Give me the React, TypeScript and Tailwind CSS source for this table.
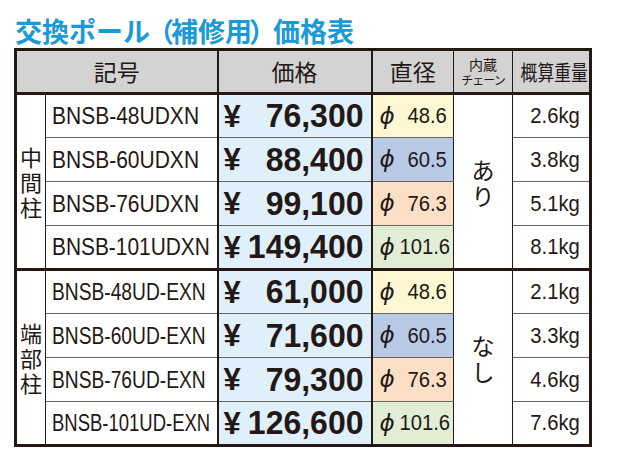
import React from "react";

type Row = { model: string; fit: string; price: string; dia: string; weight: string };

// each model number is squeezed to its own width, as in the printed table
const groups: { label: string; chain: string; rows: Row[] }[] = [
  {
    label: "中間柱",
    chain: "あり",
    rows: [
      { model: "BNSB-48UDXN", fit: "scale-x-[0.875]", price: "76,300", dia: "48.6", weight: "2.6kg" },
      { model: "BNSB-60UDXN", fit: "scale-x-[0.875]", price: "88,400", dia: "60.5", weight: "3.8kg" },
      { model: "BNSB-76UDXN", fit: "scale-x-[0.875]", price: "99,100", dia: "76.3", weight: "5.1kg" },
      { model: "BNSB-101UDXN", fit: "scale-x-[0.87]", price: "149,400", dia: "101.6", weight: "8.1kg" },
    ],
  },
  {
    label: "端部柱",
    chain: "なし",
    rows: [
      { model: "BNSB-48UD-EXN", fit: "scale-x-[0.8]", price: "61,000", dia: "48.6", weight: "2.1kg" },
      { model: "BNSB-60UD-EXN", fit: "scale-x-[0.8]", price: "71,600", dia: "60.5", weight: "3.3kg" },
      { model: "BNSB-76UD-EXN", fit: "scale-x-[0.8]", price: "79,300", dia: "76.3", weight: "4.6kg" },
      { model: "BNSB-101UD-EXN", fit: "scale-x-[0.77]", price: "126,600", dia: "101.6", weight: "7.6kg" },
    ],
  },
];

// diameter cell colours, same order in both groups
const diaBg = ["bg-[#fdf7d4]", "bg-[#b8cae6]", "bg-[#fddfc6]", "bg-[#e1edd4]"];

const jp = "font-['Noto_Sans_CJK_JP',sans-serif]";
const sans = "font-['Liberation_Sans',sans-serif]";

export default function App() {
  return (
    <div className="w-[618px] h-[468px] bg-white text-[#231815]">
      <h1 className={`${jp} pl-[15px] pt-[13px] text-[27px] leading-[35px] font-bold text-[#1a9ad6] whitespace-nowrap`}>
        交換ポール<span className="-mx-[3px]">（</span>補修用<span className="-mx-[3px]">）</span>価格表
      </h1>

      <table className="ml-[14px] w-[575px] table-fixed border-collapse border-[3px] border-[#231815]">
        <colgroup>
          <col className="w-[30px]" />
          <col className="w-[172px]" />
          <col className="w-[154px]" />
          <col className="w-[82px]" />
          <col className="w-[59px]" />
          <col className="w-[78px]" />
        </colgroup>
        <thead>
          <tr className={`${jp} h-[44px] bg-[#d3d3d3] leading-none`}>
            <th colSpan={2} className="border-b-[3px] border-r-2 border-[#231815] text-[23px] font-normal">
              記号
            </th>
            <th className="border-b-[3px] border-r-2 border-[#231815] text-[23px] font-normal">価格</th>
            <th className="border-b-[3px] border-r border-[#231815] text-[23px] font-normal">直径</th>
            <th className="border-b-[3px] border-r border-[#231815] font-normal">
              <div className="text-[14px] leading-[16px]">内蔵</div>
              <div className="text-[12px] leading-[16px] tracking-[-1px]">チェーン</div>
            </th>
            <th className="border-b-[3px] border-[#231815] font-normal">
              <div className="origin-center scale-x-[0.8] text-[21px] whitespace-nowrap">概算重量</div>
            </th>
          </tr>
        </thead>
        {groups.map((g) => (
          <tbody key={g.label} className="border-t-[3px] border-[#231815]">
            {g.rows.map((r, i) => (
              <tr key={r.model} className="h-[44px] leading-none">
                {i === 0 && (
                  <td rowSpan={4} className={`${jp} border-r border-[#231815] bg-white text-center text-[22px] leading-[25px]`}>
                    <div className="flex flex-col items-center">
                      {g.label.split("").map((c) => (
                        <span key={c}>{c}</span>
                      ))}
                    </div>
                  </td>
                )}
                <td className={`${sans} border-b border-r-2 border-b-[#666] border-r-[#231815] bg-white pl-[6px] text-[24px] whitespace-nowrap overflow-hidden`}>
                  <span className={`inline-block origin-left ${r.fit}`}>{r.model}</span>
                </td>
                <td className={`${sans} border-b border-r-2 border-b-[#666] border-r-[#231815] bg-[#dff0fa] pl-[5px] pr-[7px] text-[32px] font-bold`}>
                  <div className="flex items-center justify-between">
                    <span className="text-[31px]">¥</span>
                    <span className="inline-block origin-right scale-y-[1.04]">{r.price}</span>
                  </div>
                </td>
                <td className={`${diaBg[i]} ${sans} border-b border-r border-b-[#666] border-r-[#231815] pl-[7px] pr-[6px] text-[22px]`}>
                  <div className="flex items-center justify-between">
                    <span className="font-['DejaVu_Sans',sans-serif] text-[23px] italic">ϕ</span>
                    <span className="inline-block origin-right scale-x-[0.92]">{r.dia}</span>
                  </div>
                </td>
                {i === 0 && (
                  <td rowSpan={4} className={`${jp} border-r border-[#231815] bg-white text-center text-[23px] leading-[26px]`}>
                    <div className="flex flex-col items-center">
                      {g.chain.split("").map((c) => (
                        <span key={c}>{c}</span>
                      ))}
                    </div>
                  </td>
                )}
                <td className={`${sans} border-b border-b-[#666] bg-white pr-[9px] text-right text-[22px]`}>
                  <span className="inline-block origin-right scale-x-[0.92]">{r.weight}</span>
                </td>
              </tr>
            ))}
          </tbody>
        ))}
      </table>
    </div>
  );
}
